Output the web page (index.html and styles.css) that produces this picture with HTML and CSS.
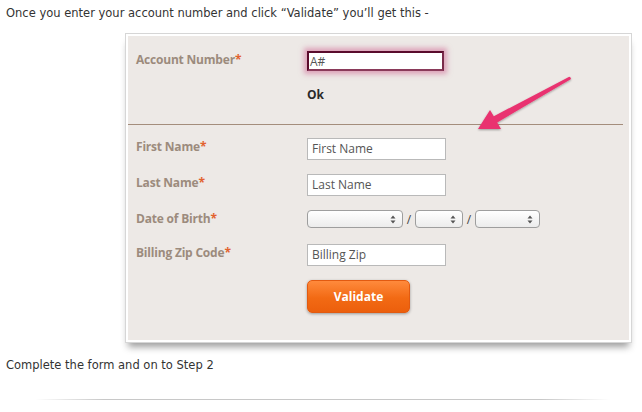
FILE: index.html
```html
<!DOCTYPE html>
<html>
<head>
<meta charset="utf-8">
<link rel="stylesheet" href="styles.css">
</head>
<body>
<p class="intro">Once you enter your account number and click “Validate” you’ll get this -</p>
<div class="panel">
  <div class="inner">
    <div class="row row-account">
      <div class="label">Account Number<span class="req">*</span></div>
      <div class="field"><div class="input input-focus">A#</div></div>
    </div>
    <div class="ok-row"><div class="ok">Ok</div></div>
    <div class="sep"></div>
    <div class="row row-first">
      <div class="label">First Name<span class="req">*</span></div>
      <div class="field"><div class="input">First Name</div></div>
    </div>
    <div class="row row-gap">
      <div class="label">Last Name<span class="req">*</span></div>
      <div class="field"><div class="input">Last Name</div></div>
    </div>
    <div class="row row-gap">
      <div class="label">Date of Birth<span class="req">*</span></div>
      <div class="field dob">
        <div class="select sel-m"><svg width="6" height="9" viewBox="0 0 6 9"><path d="M3 0.5L5.5 3.5H0.5Z M3 8.5L5.5 5.5H0.5Z" fill="#555"/></svg></div>
        <span class="slash">/</span>
        <div class="select sel-d"><svg width="6" height="9" viewBox="0 0 6 9"><path d="M3 0.5L5.5 3.5H0.5Z M3 8.5L5.5 5.5H0.5Z" fill="#555"/></svg></div>
        <span class="slash">/</span>
        <div class="select sel-y"><svg width="6" height="9" viewBox="0 0 6 9"><path d="M3 0.5L5.5 3.5H0.5Z M3 8.5L5.5 5.5H0.5Z" fill="#555"/></svg></div>
      </div>
    </div>
    <div class="row row-zip">
      <div class="label">Billing Zip Code<span class="req">*</span></div>
      <div class="field"><div class="input">Billing Zip</div></div>
    </div>
    <div class="btn-row"><div class="button">Validate</div></div>
  </div>
</div>
<p class="outro">Complete the form and on to Step 2</p>
<div class="rule"></div>
<svg class="arrow" width="642" height="412" viewBox="0 0 642 412">
  <defs>
    <filter id="sh" x="-20%" y="-20%" width="140%" height="140%">
      <feDropShadow dx="0" dy="1" stdDeviation="1.2" flood-color="#000" flood-opacity="0.35"/>
    </filter>
  </defs>
  <path d="M478 129 L490 110 L493.8 116.2 L569.3 76.7 Q571.5 77.5 570.7 79.3 L497.2 122.4 L501 129 Z" fill="#e9336f" filter="url(#sh)"/>
</svg>
</body>
</html>
```
FILE: styles.css
```css
html, body {
  margin: 0;
  padding: 0;
  background: #fff;
}
body {
  position: relative;
  width: 642px;
  height: 412px;
  overflow: hidden;
  font-family: "DejaVu Sans", Verdana, sans-serif;
  font-size: 11.5px;
  color: #333;
}
.intro {
  margin: 0;
  padding: 7px 0 0 6px;
  line-height: 13px;
}
.panel {
  margin: 13px 0 0 125px;
  width: 501px;
  border: 1px solid #d6d6d6;
  padding: 2px;
  background: #fff;
  box-shadow: 0 7px 7px -3px rgba(0, 0, 0, 0.38);
}
.inner {
  background: #ede9e6;
  padding: 15px 8px 27px 8px;
}
.row {
  display: flex;
  align-items: flex-start;
}
.label {
  width: 171px;
  font-family: "Open Sans", sans-serif;
  font-weight: bold;
  font-size: 12px;
  line-height: 16px;
  padding-top: 1px;
  color: #9c8b7d;
  letter-spacing: -0.2px;
}
.row-account .label {
  line-height: 18px;
  padding-top: 0;
}
.req {
  color: #e2622f;
}
.field {
  display: flex;
  align-items: center;
}
.input {
  box-sizing: border-box;
  width: 139px;
  height: 22px;
  border: 1px solid #b9b9b9;
  background: #fff;
  font-family: "Open Sans", sans-serif;
  font-size: 12px;
  line-height: 20px;
  color: #555;
  padding-left: 4px;
}
.input-focus {
  width: 137px;
  height: 20px;
  line-height: 17px;
  border: 2px solid #5a0b2c;
  border-right-color: #7a2a4a;
  border-bottom-color: #8a3a5a;
  padding-left: 1px;
  box-shadow: 0 0 5px 3px rgba(205, 90, 140, 0.5);
}
.ok-row {
  padding: 16px 0 0 171px;
}
.ok {
  font-family: "Open Sans", sans-serif;
  font-weight: bold;
  font-size: 12px;
  line-height: 16px;
  color: #2a2a2a;
}
.sep {
  height: 1px;
  background: #a48d7c;
  margin: 21px -2px 0 -8px;
}
.row-first {
  margin-top: 13px;
}
.row-gap {
  margin-top: 14px;
}
.row-zip {
  margin-top: 16px;
}
.dob {
  height: 18px;
  gap: 0;
}
.select {
  box-sizing: border-box;
  height: 18px;
  border: 1px solid #9e9e9e;
  border-radius: 4px;
  background: linear-gradient(#ffffff, #ececec);
  display: flex;
  align-items: center;
  justify-content: flex-end;
  padding-right: 6px;
}
.sel-m { width: 96px; }
.sel-d { width: 48px; }
.sel-y { width: 65px; }
.slash {
  width: 12px;
  text-align: center;
  font-family: "Open Sans", sans-serif;
  font-size: 12px;
  color: #444;
}
.btn-row {
  padding: 14px 0 0 171px;
}
.button {
  box-sizing: border-box;
  width: 103px;
  height: 33px;
  border-radius: 5px;
  background: linear-gradient(#ff8a3c, #f26a14 55%, #ec5f0c);
  border: 1px solid #e25a10;
  box-shadow: 0 1px 3px rgba(0, 0, 0, 0.35);
  color: #fff;
  font-family: "Open Sans", sans-serif;
  font-weight: bold;
  font-size: 12px;
  line-height: 31px;
  text-align: center;
}
.outro {
  margin: 0;
  padding: 16px 0 0 6px;
  line-height: 13px;
}
.rule {
  height: 1px;
  margin: 27px 32px 0 35px;
  background: linear-gradient(to right, rgba(200,200,200,0), #c8c8c8 12%, #c8c8c8 88%, rgba(200,200,200,0));
}
.arrow {
  position: absolute;
  left: 0;
  top: 0;
  pointer-events: none;
}
```
